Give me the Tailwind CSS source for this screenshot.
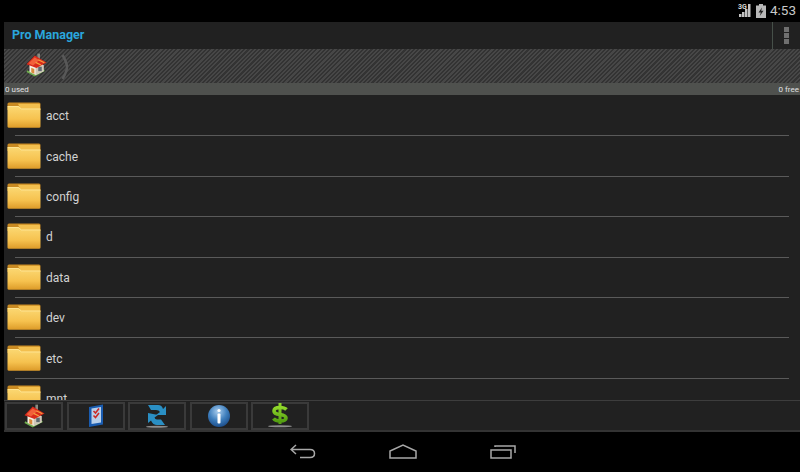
<!DOCTYPE html>
<html lang="en">
<head>
    <meta charset="UTF-8">
    <title>Pro Manager</title>
    <script src="https://cdn.jsdelivr.net/npm/@tailwindcss/browser@4"></script>
</head>
<body class="w-[800px] h-[472px] overflow-hidden bg-black font-['Roboto',sans-serif] text-white">
    <svg width="0" height="0" class="absolute">
        <defs>
            <linearGradient id="folderFront" x1="0" y1="0" x2="0" y2="1">
                <stop offset="0" stop-color="#fbd873"/>
                <stop offset="0.6" stop-color="#f6c24f"/>
                <stop offset="1" stop-color="#dc9a28"/>
            </linearGradient>
            <linearGradient id="dollar" x1="0" y1="0" x2="0" y2="1">
                <stop offset="0" stop-color="#8fd62a"/>
                <stop offset="1" stop-color="#55a012"/>
            </linearGradient>
            <radialGradient id="infoBall" cx="0.45" cy="0.3" r="0.8">
                <stop offset="0" stop-color="#a9cdee"/>
                <stop offset="0.5" stop-color="#3f7fbd"/>
                <stop offset="1" stop-color="#123f7c"/>
            </radialGradient>
            <symbol id="folder" viewBox="0 0 34 26">
                <path d="M.5 2Q.5 .5 2 .5H32Q33.500 .5 33.500 2V8H.5Z" fill="#c98a22"/>
                <path d="M11 1.800H32Q33 1.800 33 3V8H14Z" fill="#f3bf4e"/>
                <path d="M.5 4H11.500L14.500 6.500H33.500V24.500Q33.500 25.800 32 25.800H2Q.5 25.800 .5 24.500Z" fill="url(#folderFront)"/>
                <path d="M.8 4.500H11.300L14.300 7H33.300" fill="none" stroke="#ffe9a0" stroke-width=".7"/>
            </symbol>
            <symbol id="house" viewBox="0 0 24 26">
                <rect x="13" y="0" width="3" height="7" fill="#8a8a80"/>
                <path d="M1 20L10 25L21 19" fill="none" stroke="#6fae4e" stroke-width="2"/>
                <path d="M4 12L12 9L20 13V20L11 24.500L4 21Z" fill="#f5efe2"/>
                <path d="M11 15L20 13V20L11 24.500Z" fill="#cfc7b8"/>
                <rect x="14" y="15" width="4" height="5" fill="#5f6a70"/>
                <path d="M6 16L9.500 17.500V23L6 21.500Z" fill="#d88a3c"/>
                <path d="M0.500 12L10 2L23.500 10L12 16.500Z" fill="#d92a1c"/>
                <path d="M3 11L10 4L15 7.500L8 13.500Z" fill="#f2603a"/>
                <path d="M14 7L21 10.500M11 10L17 13" stroke="#f6a03c" stroke-width="1.400"/>
            </symbol>
        </defs>
    </svg>

    <!-- status bar -->
    <div class="h-[22px] flex items-center justify-end pr-1">
        <div class="relative w-[12px] h-[14px] mr-[5px]">
            <span class="absolute -left-[1px] -top-[1px] text-[7px] leading-[8px] font-bold text-[#d8d8d8]">3G</span>
            <svg width="12" height="14" viewBox="0 0 12 14"><path d="M0 13h2.500v-3H0zM3 13h2.500V8H3zM6 13h2.500V5H6zM9 13h2.500V0H9z" fill="#c4c4c4"/></svg>
        </div>
        <svg class="mr-1" width="10" height="14" viewBox="0 0 10 14">
            <path d="M3 0h4v1.500h3V14H0V1.500h3z" fill="#b8b8b8"/>
            <path d="M6 3.500L2.500 8.500H4.800L3.800 12L7.500 6.800H5.200Z" fill="#222"/>
        </svg>
        <span class="text-[13.500px] leading-none text-[#c8c8c8]">4:53</span>
    </div>

    <div class="ml-1 h-[410px] flex flex-col bg-[#212121]">
        <!-- title bar -->
        <div class="h-[27px] flex items-center pl-2">
            <span class="flex-1 text-[12.500px] font-bold text-[#2aa6dc]">Pro Manager</span>
            <div class="w-[28px] h-full border-l border-[#465049] flex flex-col items-center justify-center gap-px">
                <i class="block w-[5px] h-[5px] bg-[#6f6f6f]"></i>
                <i class="block w-[5px] h-[5px] bg-[#6f6f6f]"></i>
                <i class="block w-[5px] h-[5px] bg-[#6f6f6f]"></i>
            </div>
        </div>

        <!-- breadcrumb -->
        <div class="h-[34px] flex items-center pl-[22px] bg-[repeating-linear-gradient(135deg,#474747_0,#474747_1.500px,#333333_1.500px,#333333_3px)]">
            <svg width="21" height="24" class="mt-[-2px]"><use href="#house"/></svg>
            <svg class="ml-[14px] mt-[1px]" width="8" height="26" viewBox="0 0 8 26"><path d="M1.500 1C5 7 6 10 6 13S5 19 1.500 25" fill="none" stroke="#585858" stroke-width="2.500"/></svg>
        </div>

        <!-- usage -->
        <div class="h-[12px] flex items-center justify-between px-px pt-px bg-[#4f514e] text-[8px] leading-none text-[#e2e2e2]">
            <span>0 used</span>
            <span>0 free</span>
        </div>

        <!-- file list -->
        <div class="h-[305px] overflow-hidden pt-px">
            <div class="h-[40.400px] flex items-center pl-[3px] relative text-[12px] text-[#d2d2d2]">
                <svg width="34" height="26" class="mt-[-2px]"><use href="#folder"/></svg><span class="ml-[5px]">acct</span>
                <div class="absolute left-[11px] right-[11px] bottom-0 h-px bg-[#5a5a5a]"></div>
            </div>
            <div class="h-[40.400px] flex items-center pl-[3px] relative text-[12px] text-[#d2d2d2]">
                <svg width="34" height="26" class="mt-[-2px]"><use href="#folder"/></svg><span class="ml-[5px]">cache</span>
                <div class="absolute left-[11px] right-[11px] bottom-0 h-px bg-[#5a5a5a]"></div>
            </div>
            <div class="h-[40.400px] flex items-center pl-[3px] relative text-[12px] text-[#d2d2d2]">
                <svg width="34" height="26" class="mt-[-2px]"><use href="#folder"/></svg><span class="ml-[5px]">config</span>
                <div class="absolute left-[11px] right-[11px] bottom-0 h-px bg-[#5a5a5a]"></div>
            </div>
            <div class="h-[40.400px] flex items-center pl-[3px] relative text-[12px] text-[#d2d2d2]">
                <svg width="34" height="26" class="mt-[-2px]"><use href="#folder"/></svg><span class="ml-[5px]">d</span>
                <div class="absolute left-[11px] right-[11px] bottom-0 h-px bg-[#5a5a5a]"></div>
            </div>
            <div class="h-[40.400px] flex items-center pl-[3px] relative text-[12px] text-[#d2d2d2]">
                <svg width="34" height="26" class="mt-[-2px]"><use href="#folder"/></svg><span class="ml-[5px]">data</span>
                <div class="absolute left-[11px] right-[11px] bottom-0 h-px bg-[#5a5a5a]"></div>
            </div>
            <div class="h-[40.400px] flex items-center pl-[3px] relative text-[12px] text-[#d2d2d2]">
                <svg width="34" height="26" class="mt-[-2px]"><use href="#folder"/></svg><span class="ml-[5px]">dev</span>
                <div class="absolute left-[11px] right-[11px] bottom-0 h-px bg-[#5a5a5a]"></div>
            </div>
            <div class="h-[40.400px] flex items-center pl-[3px] relative text-[12px] text-[#d2d2d2]">
                <svg width="34" height="26" class="mt-[-2px]"><use href="#folder"/></svg><span class="ml-[5px]">etc</span>
                <div class="absolute left-[11px] right-[11px] bottom-0 h-px bg-[#5a5a5a]"></div>
            </div>
            <div class="h-[40.400px] flex items-center pl-[3px] relative text-[12px] text-[#d2d2d2]">
                <svg width="34" height="26" class="mt-[-2px]"><use href="#folder"/></svg><span class="ml-[5px]">mnt</span>
            </div>
        </div>

        <!-- toolbar -->
        <div class="h-[32px] flex items-center gap-[3.500px] pl-px border-t border-[#3d3d3d] border-b-2 border-b-[#333] bg-[#212121]">
            <div class="w-[58px] h-[28px] border-2 border-[#3a3a3a] flex items-center justify-center">
                <svg width="21" height="24"><use href="#house"/></svg>
            </div>
            <div class="w-[58px] h-[28px] border-2 border-[#3a3a3a] flex items-center justify-center">
                <svg width="16" height="23" viewBox="0 0 16 23">
                    <path d="M1 3L15 .5V20.500L1 23Z" fill="#1a5cb0"/>
                    <path d="M3.500 4.500L13 3V18.500L3.500 20Z" fill="#b9d0ea"/>
                    <path d="M5.500 7L7.500 9L11 4.500M5.500 11.500L7.500 13.500L11 9" fill="none" stroke="#cc2a26" stroke-width="1.600"/>
                </svg>
            </div>
            <div class="w-[58px] h-[28px] border-2 border-[#3a3a3a] flex items-center justify-center">
                <svg width="24" height="24" viewBox="0 0 24 24">
                    <ellipse cx="12" cy="22.800" rx="11" ry="1" fill="#8d8d8d"/>
                    <path d="M3 1H13Q17 1 18 5L21 2V11H11L15 8Q14 6 11 6H6Z" fill="#2a8fc4"/>
                    <path d="M3 9V19L6 16.500Q8 21 12 21H20L16 15.500H12Q10 15.500 9.500 13.500L13 11Z" fill="#2a8fc4"/>
                </svg>
            </div>
            <div class="w-[58px] h-[28px] border-2 border-[#3a3a3a] flex items-center justify-center">
                <svg width="24" height="24" viewBox="0 0 24 24">
                    <circle cx="12" cy="12" r="11" fill="url(#infoBall)"/>
                    <rect x="10.500" y="9.500" width="3" height="10" rx="1" fill="#fff"/>
                    <circle cx="12" cy="6.500" r="1.600" fill="#fff"/>
                </svg>
            </div>
            <div class="w-[58px] h-[28px] border-2 border-[#3a3a3a] flex items-center justify-center">
                <svg width="24" height="25" viewBox="0 0 24 25">
                    <ellipse cx="12" cy="23.200" rx="12" ry="1" fill="#8d8d8d"/>
                    <path d="M10.500 0H13.500V21H10.500Z" fill="url(#dollar)"/>
                    <path d="M18.500 6.500Q16.500 4.500 12 4.500Q6 4.500 6 8Q6 11 12 11.500Q18 12.500 18 15Q18 18 12 18Q7.500 18 5.500 15.500" fill="none" stroke="url(#dollar)" stroke-width="3.600"/>
                </svg>
            </div>
        </div>
    </div>

    <!-- navigation bar -->
    <div class="h-[40px] flex items-center justify-center pl-[5px] pb-[2px]">
        <svg width="26" height="15" viewBox="0 0 26 15" fill="none" stroke="#a8a8a8" stroke-width="1.500">
            <path d="M1 5.500H20Q24.500 5.500 24.500 9.500T20 13.500H10M6 1L1 5.500L6 10"/>
        </svg>
        <svg class="ml-[73px]" width="28" height="15" viewBox="0 0 28 15" fill="none" stroke="#a8a8a8" stroke-width="1.500">
            <path d="M1 14V7L14 1L27 7V14Z"/>
        </svg>
        <svg class="ml-[73px]" width="26" height="15" viewBox="0 0 26 15" fill="none" stroke="#a8a8a8" stroke-width="1.500">
            <rect x="1" y="6" width="20" height="8"/>
            <path d="M5 3V2H25V9"/>
        </svg>
    </div>
</body>
</html>
